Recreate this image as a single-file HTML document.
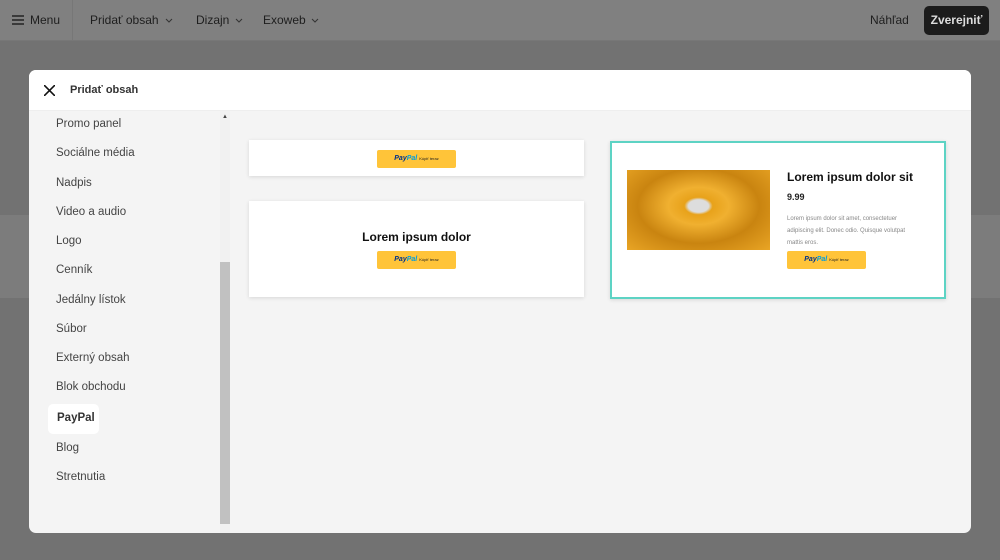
<!DOCTYPE html>
<html><head><meta charset="utf-8"><style>
*{box-sizing:border-box;margin:0;padding:0}
body{width:1000px;height:560px;overflow:hidden;background:#727272;font-family:"Liberation Sans",sans-serif;position:relative}
.top{position:absolute;left:0;top:0;width:1000px;height:41px;background:#808080;border-bottom:1px solid #777}
.top span{position:absolute;top:13px;font-size:12px;color:#1e1e1e}
.top svg.c{position:absolute;top:18px}
.band{position:absolute;left:0;top:215px;width:1000px;height:83px;background:#7c7c7c}
.modal{position:absolute;left:29px;top:70px;width:942px;height:463px;background:#f4f4f4;border-radius:7px;overflow:hidden}
.mh{height:41px;background:#fff;border-bottom:1px solid #eee;position:relative}
.mh b{position:absolute;left:41px;top:14px;font-size:11px;color:#333}
.side{position:absolute;left:0;top:41px;width:200px}
.side div{position:absolute;left:27px;font-size:11.5px;color:#444}
.sb{position:absolute;left:191px;top:192px;width:10px;height:262px;background:#c1c1c1}
.card{position:absolute;background:#fff;box-shadow:0 1px 4px rgba(0,0,0,.12)}
.pp{position:absolute;width:79px;height:18px;background:#ffc439;border-radius:2px;font-size:7px;color:#003087;font-weight:bold;font-style:italic;text-align:center;line-height:18px}
.pp i{color:#009cde}
.pp s{text-decoration:none;font-style:normal;color:#222;font-size:4px;font-weight:normal}
</style></head><body>
<div class="top">
<svg style="position:absolute;left:12px;top:15px" width="12" height="10"><path d="M0 1h12M0 5h12M0 9h12" stroke="#222" stroke-width="1.6"/></svg>
<span style="left:30px">Menu</span>
<div style="position:absolute;left:72px;top:0;width:1px;height:41px;background:#777"></div>
<span style="left:90px">Pridať obsah</span><svg class="c" style="left:165px" width="8" height="5"><path d="M1 1l3 3 3-3" stroke="#333" fill="none"/></svg>
<span style="left:196px">Dizajn</span><svg class="c" style="left:235px" width="8" height="5"><path d="M1 1l3 3 3-3" stroke="#333" fill="none"/></svg>
<span style="left:263px">Exoweb</span><svg class="c" style="left:311px" width="8" height="5"><path d="M1 1l3 3 3-3" stroke="#333" fill="none"/></svg>
<span style="left:870px">Náhľad</span>
<div style="position:absolute;left:924px;top:6px;width:65px;height:29px;background:#1c1c1c;border-radius:5px;color:#ddd;font-size:12px;font-weight:bold;text-align:center;line-height:29px">Zverejniť</div>
</div>
<div class="band"></div>
<div class="modal">
<div class="mh"><svg style="position:absolute;left:15px;top:15px" width="11" height="11"><path d="M0 0L11 11M11 0L0 11" stroke="#111" stroke-width="1.6"/></svg><b>Pridať obsah</b></div>
<div class="side">
<div style="top:7px">Promo panel</div>
<div style="top:36px">Sociálne média</div>
<div style="top:66px">Nadpis</div>
<div style="top:95px">Video a audio</div>
<div style="top:124px">Logo</div>
<div style="top:153px">Cenník</div>
<div style="top:183px">Jedálny lístok</div>
<div style="top:212px">Súbor</div>
<div style="top:241px">Externý obsah</div>
<div style="top:270px">Blok obchodu</div>
<div style="top:293px;left:19px;width:51px;height:30px;background:#fff;border-radius:5px;padding:8px 0 0 9px;font-weight:bold;color:#333">PayPal</div>
<div style="top:331px">Blog</div>
<div style="top:360px">Stretnutia</div>
</div>
<div style="position:absolute;left:191px;top:41px;width:10px;height:422px;background:#f1f1f1"></div>
<div class="sb"></div>
<div style="position:absolute;left:193px;top:44px;font-size:6px;color:#444">▲</div>
<div class="card" style="left:220px;top:70px;width:335px;height:36px"><div class="pp" style="left:128px;top:10px">Pay<i>Pal</i> <s>Kúpiť teraz</s></div></div>
<div class="card" style="left:220px;top:131px;width:335px;height:96px">
<div style="position:absolute;left:0;width:335px;top:29px;text-align:center;font-size:12px;font-weight:bold;color:#111">Lorem ipsum dolor</div>
<div class="pp" style="left:128px;top:50px">Pay<i>Pal</i> <s>Kúpiť teraz</s></div></div>
<div class="card" style="left:581px;top:71px;width:336px;height:158px;border:2px solid #5dd3c4">
<div style="position:absolute;left:15px;top:27px;width:143px;height:80px;background:radial-gradient(ellipse at 50% 45%,#ddd 0 10%,#e8a21a 14%,#f0b030 30%,#c98410 60%,#e9a525 100%)"></div>
<div style="position:absolute;left:175px;top:27px;font-size:12px;font-weight:bold;color:#111">Lorem ipsum dolor sit</div>
<div style="position:absolute;left:175px;top:49px;font-size:9px;font-weight:bold;color:#222">9.99</div>
<div style="position:absolute;left:175px;top:70px;width:135px;font-size:6px;line-height:12px;color:#888">Lorem ipsum dolor sit amet, consectetuer adipiscing elit. Donec odio. Quisque volutpat mattis eros.</div>
<div class="pp" style="left:175px;top:108px">Pay<i>Pal</i> <s>Kúpiť teraz</s></div>
</div>
</div>
</body></html>
